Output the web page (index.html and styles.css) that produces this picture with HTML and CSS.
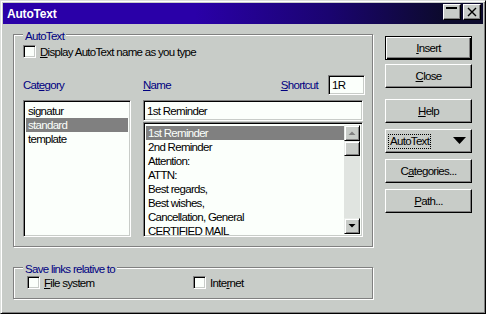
FILE: index.html
```html
<!DOCTYPE html>
<html lang="en">
<head>
  <meta charset="UTF-8">
  <title>AutoText</title>
  <link rel="stylesheet" href="styles.css">
</head>
<body>
  <div class="window">
    <div class="titlebar">
      <span class="title">AutoText</span>
      <div class="title-buttons">
        <span class="tbtn">
          <svg width="16" height="14" viewBox="0 0 16 14"><rect x="2" y="2" width="11" height="2" fill="#000"/></svg>
        </span>
        <span class="tbtn">
          <svg width="16" height="14" viewBox="0 0 16 14"><path d="M4 3 L12 11 M12 3 L4 11" stroke="#000" stroke-width="1.4" fill="none"/></svg>
        </span>
      </div>
    </div>

    <div class="content">
      <div class="left">
        <!-- AutoText group -->
        <div class="group group-autotext">
          <span class="group-label">AutoText</span>
          <div class="check">
            <span class="box"></span>
            <span><u>D</u>isplay AutoText name as you type</span>
          </div>

          <div class="labels-row">
            <span class="lbl lbl-category">Cat<u>e</u>gory</span>
            <div class="name-head">
              <span class="lbl"><u>N</u>ame</span>
              <span class="lbl lbl-shortcut"><u>S</u>hortcut</span>
              <div class="field field-shortcut">1R</div>
            </div>
          </div>

          <div class="lists-row">
            <ul class="listbox category-list">
              <li>signatur</li>
              <li class="selected">standard</li>
              <li>template</li>
            </ul>
            <div class="name-col">
              <div class="field field-name">1st Reminder</div>
              <div class="listbox name-list">
                <ul class="items">
                  <li class="selected">1st Reminder</li>
                  <li>2nd Reminder</li>
                  <li>Attention:</li>
                  <li>ATTN:</li>
                  <li>Best regards,</li>
                  <li>Best wishes,</li>
                  <li>Cancellation, General</li>
                  <li>CERTIFIED MAIL</li>
                </ul>
                <div class="scrollbar">
                  <span class="sb-btn">
                    <svg width="14" height="14" viewBox="0 0 14 14"><path d="M3.5 9 L10.5 9 L7 5.5 Z" fill="#808080"/></svg>
                  </span>
                  <span class="sb-btn sb-thumb"></span>
                  <span class="sb-track"></span>
                  <span class="sb-btn">
                    <svg width="14" height="14" viewBox="0 0 14 14"><path d="M3.5 5 L10.5 5 L7 8.5 Z" fill="#000"/></svg>
                  </span>
                </div>
              </div>
            </div>
          </div>
        </div>

        <!-- Save links group -->
        <div class="group group-links">
          <span class="group-label">Save links relative to</span>
          <div class="check check-file">
            <span class="box"></span>
            <span><u>F</u>ile system</span>
          </div>
          <div class="check">
            <span class="box"></span>
            <span>Inte<u>r</u>net</span>
          </div>
        </div>
      </div>

      <div class="buttons">
        <button class="btn btn-default"><u>I</u>nsert</button>
        <button class="btn btn-close"><u>C</u>lose</button>
        <button class="btn btn-help"><u>H</u>elp</button>
        <button class="btn btn-drop">
          <span class="focus">AutoText</span>
          <svg width="14" height="8" viewBox="0 0 14 8"><path d="M0 0 L13 0 L6.5 7 Z" fill="#000"/></svg>
        </button>
        <button class="btn">C<u>a</u>tegories...</button>
        <button class="btn"><u>P</u>ath...</button>
      </div>
    </div>
  </div>
</body>
</html>
```

FILE: styles.css
```css
* { box-sizing: border-box; }

body {
  margin: 0;
  background: #c8ccc8;
  font-family: "Liberation Sans", Arial, sans-serif;
  font-size: 11.5px;
  letter-spacing: -0.7px;
  line-height: 14px;
  color: #000;
}

ul { margin: 0; padding: 0; list-style: none; }

.window {
  width: 486px;
  height: 314px;
  border: 1px solid;
  border-color: #dcdfdc #000 #000 #dcdfdc;
  box-shadow: inset 1px 1px #fff, inset -1px -1px #808080;
  padding: 2px;
  background: #c8ccc8;
}

/* Title bar */
.titlebar {
  height: 21px;
  display: flex;
  align-items: center;
  padding: 0 2px;
  background: linear-gradient(90deg, #2a00a8 0%, #2a00a8 40%, #1a0470 68%, #0c0a2c 92%);
}
.title {
  margin-left: 2px;
  font-weight: bold;
  font-size: 12px;
  letter-spacing: -0.2px;
  color: #fff;
}
.title-buttons {
  margin-left: auto;
  align-self: flex-start;
  margin-top: 1px;
  display: flex;
  gap: 2px;
}
.tbtn {
  display: block;
  width: 18px;
  height: 16px;
  background: #c8ccc8;
  border: 1px solid;
  border-color: #fff #000 #000 #fff;
  box-shadow: inset -1px -1px #808080;
}
.tbtn svg { display: block; }

/* Body */
.content {
  display: flex;
  gap: 12px;
  padding: 10px 11px 0 10px;
}
.left { width: 360px; }

.group {
  position: relative;
  border: 1px solid #808080;
  box-shadow: inset 1px 1px #fff, 1px 1px #fff;
}
.group-label {
  position: absolute;
  top: -5px;
  left: 9px;
  padding: 0 2px;
  background: #c8ccc8;
  color: #000080;
  line-height: 13px;
}

.group-autotext {
  height: 213px;
  padding: 10px 0 0 9px;
}
.group-links {
  margin-top: 20px;
  height: 32px;
  padding: 8px 0 0 13px;
  display: flex;
}

.check {
  display: flex;
  align-items: center;
  gap: 4px;
  height: 13px;
}
.check-file { width: 166px; }
.box {
  width: 13px;
  height: 13px;
  background: #fbfffb;
  border: 1px solid;
  border-color: #808080 #fff #fff #808080;
  box-shadow: inset 1px 1px #000, inset -1px -1px #c8ccc8;
}

.labels-row {
  margin-top: 17px;
  height: 20px;
  display: flex;
  align-items: center;
}
.lbl { color: #000080; }
.lbl-category { width: 120px; }
.name-head {
  width: 222px;
  display: flex;
  align-items: center;
}
.lbl-shortcut { margin-left: auto; margin-right: 10px; }

.field {
  background: #fbfffb;
  border: 1px solid;
  border-color: #808080 #fff #fff #808080;
  box-shadow: inset 1px 1px #000, inset -1px -1px #c8ccc8;
  padding: 0 3px;
  display: flex;
  align-items: center;
}
.field-shortcut { width: 37px; height: 20px; }
.field-name { height: 21px; }

.lists-row {
  margin-top: 5px;
  display: flex;
  gap: 12px;
}
.listbox {
  background: #fbfffb;
  border: 1px solid;
  border-color: #808080 #fff #fff #808080;
  box-shadow: inset 1px 1px #000, inset -1px -1px #c8ccc8;
  padding: 2px;
  overflow: hidden;
}
.listbox li { height: 14px; padding-left: 2px; white-space: nowrap; }
.listbox li.selected { background: #808080; color: #fbfffb; }

.category-list { width: 108px; height: 137px; padding-top: 3px; }

.name-col { width: 220px; }
.name-list {
  margin-top: 1px;
  height: 115px;
  display: flex;
}
.name-list .items { flex: 1; padding-top: 1px; }

.scrollbar {
  width: 16px;
  display: flex;
  flex-direction: column;
  background: #e0e4e0;
}
.sb-btn {
  display: block;
  width: 16px;
  height: 16px;
  background: #c8ccc8;
  border: 1px solid;
  border-color: #e8ece8 #000 #000 #e8ece8;
  box-shadow: inset 1px 1px #fff, inset -1px -1px #808080;
}
.sb-btn svg { display: block; }
.sb-thumb { height: 15px; }
.sb-track { flex: 1; }

/* Buttons */
.buttons {
  width: 87px;
  margin-top: 2px;
  display: flex;
  flex-direction: column;
}
.btn {
  height: 24px;
  margin: 0 0 6px;
  padding: 0;
  font: inherit;
  letter-spacing: inherit;
  color: #000;
  background: #c8ccc8;
  border: 1px solid;
  border-color: #fff #000 #000 #fff;
  box-shadow: inset -1px -1px #808080;
  text-align: center;
}
.btn-default {
  border-color: #000;
  box-shadow: inset 1px 1px #fff, inset -1px -1px #000, inset -2px -2px #808080;
  margin-bottom: 4px;
}
.btn-close { margin-bottom: 11px; }
.btn-drop {
  display: flex;
  align-items: center;
  padding: 0 4px 0 2px;
}
.btn-drop svg { margin-left: auto; }
.focus {
  border: 1px dotted #000;
  padding: 0 1px;
  line-height: 13px;
}
```
